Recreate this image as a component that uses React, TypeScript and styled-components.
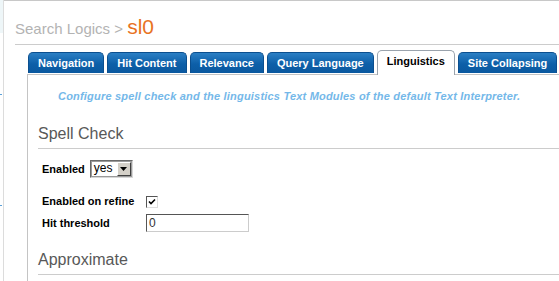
import styled, { createGlobalStyle } from "styled-components";

const GlobalStyle = createGlobalStyle`
    html, body {
        margin: 0;
        padding: 0;
        background: #ffffff;
        overflow: hidden;
    }
    body {
        font-family: "Liberation Sans", Arial, sans-serif;
    }
`;

const tabs = ["Navigation", "Hit Content", "Relevance", "Query Language", "Linguistics", "Site Collapsing"];
const activeTab = "Linguistics";

const Page = styled.div`
    display: flex;
    width: 559px;
    height: 281px;
    overflow: hidden;
`;

const SideStrip = styled.div`
    position: relative;
    width: 3px;
    flex: none;
    border-right: 1px solid #dcdcdc;
    background: linear-gradient(#eef6f8 0, #eef6f8 33px, #ffffff 33px);
`;

const SideMark = styled.span<{ $top: number }>`
    position: absolute;
    left: 0;
    top: ${({ $top }) => $top}px;
    width: 2px;
    height: 1px;
    background: #5aa0d8;
`;

const Main = styled.div`
    flex: 1;
    min-width: 0;
    border-top: 1px solid #c8c8c8;
    padding-left: 11px;
`;

const Title = styled.h1`
    margin: 0;
    padding-top: 16px;
    height: 27px;
    font-weight: normal;
    font-size: 15px;
    line-height: 20px;
    color: #b3b3b3;
    border-bottom: 1px solid #cccccc;
    white-space: nowrap;
`;

const Current = styled.span`
    font-size: 21px;
    color: #e8731f;
`;

const TabArea = styled.div`
    margin-left: 12px;
    margin-top: 5px;
`;

const TabBar = styled.div`
    display: flex;
    align-items: flex-end;
    gap: 3px;
    padding-left: 1px;
    margin-bottom: -1px;
    white-space: nowrap;
`;

const Tab = styled.div<{ $active?: boolean }>`
    flex: none;
    box-sizing: border-box;
    padding: 0 9px;
    font-size: 11px;
    font-weight: bold;
    border-radius: 5px 5px 0 0;
    ${({ $active }) =>
        $active
            ? `
        height: 25px;
        line-height: 20px;
        color: #000000;
        background: #ffffff;
        border: 1px solid #9aa3ad;
        border-bottom: none;
    `
            : `
        height: 21px;
        line-height: 21px;
        margin-bottom: 2px;
        color: #ffffff;
        background: linear-gradient(#2b7fc4, #0d5fa8 55%, #0a589f);
        border: 1px solid #0b4f8f;
        border-bottom: none;
    `}
`;

const Panel = styled.div`
    border-top: 1px solid #c4c4c4;
    border-left: 1px solid #c4c4c4;
    padding: 14px 0 0 10px;
    height: 220px;
`;

const Intro = styled.p`
    margin: 0 0 21px 20px;
    font-size: 11px;
    line-height: 14px;
    letter-spacing: 0.2px;
    font-weight: bold;
    font-style: italic;
    color: #74b8e9;
    white-space: nowrap;
`;

const SectionTitle = styled.h2`
    margin: 0;
    padding-bottom: 4px;
    font-size: 16px;
    line-height: 20px;
    font-weight: normal;
    color: #585858;
    border-bottom: 1px solid #cccccc;
`;

const Form = styled.div`
    padding: 11px 0 18px 4px;
    font-size: 11px;
    line-height: 13px;
`;

const InlineRow = styled.div`
    display: flex;
    align-items: center;
    gap: 5px;
    margin-bottom: 17px;
`;

const Label = styled.span`
    font-size: 11px;
    line-height: 13px;
    font-weight: bold;
    color: #000000;
`;

const FieldGrid = styled.div`
    display: grid;
    grid-template-columns: 104px auto;
    align-items: center;
    justify-items: start;
    row-gap: 6px;
`;

const SelectBox = styled.div`
    display: flex;
    align-items: stretch;
    box-sizing: border-box;
    width: 43px;
    height: 18px;
    border: 1px solid;
    border-color: #6a6a6a #d8d8d8 #d8d8d8 #6a6a6a;
    background: #ffffff;
    outline: 1px solid #9a9a9a;
    outline-offset: -2px;
`;

const SelectValue = styled.span`
    flex: 1;
    padding-left: 3px;
    font-size: 12px;
    line-height: 15px;
    color: #000000;
`;

const SelectButton = styled.span`
    display: flex;
    align-items: center;
    justify-content: center;
    width: 14px;
    margin: 1px;
    box-sizing: border-box;
    background: #d4d0c8;
    border: 1px solid;
    border-color: #ffffff #404040 #404040 #ffffff;
`;

const CheckBox = styled.span`
    display: flex;
    align-items: center;
    justify-content: center;
    box-sizing: border-box;
    width: 12px;
    height: 12px;
    border: 1px solid;
    border-color: #555555 #dddddd #dddddd #555555;
    background: #ffffff;
`;

const TextInput = styled.div`
    box-sizing: border-box;
    width: 103px;
    height: 18px;
    padding-left: 2px;
    border: 1px solid;
    border-color: #555555 #cccccc #cccccc #555555;
    font-size: 12px;
    line-height: 16px;
    color: #333333;
`;

export default function App() {
    return (
        <>
            <GlobalStyle />
            <Page>
                <SideStrip>
                    <SideMark $top={94} />
                    <SideMark $top={205} />
                </SideStrip>
                <Main>
                    <Title>
                        Search Logics &gt; <Current>sl0</Current>
                    </Title>
                    <TabArea>
                        <TabBar>
                            {tabs.map(t => (
                                <Tab key={t} $active={t === activeTab}>{t}</Tab>
                            ))}
                        </TabBar>
                        <Panel>
                            <Intro>
                                Configure spell check and the linguistics Text Modules of the default Text Interpreter.
                            </Intro>
                            <SectionTitle>Spell Check</SectionTitle>
                            <Form>
                                <InlineRow>
                                    <Label>Enabled</Label>
                                    <SelectBox>
                                        <SelectValue>yes</SelectValue>
                                        <SelectButton>
                                            <svg width="7" height="4" viewBox="0 0 7 4">
                                                <path d="M0 0h7L3.5 4z" fill="#000" />
                                            </svg>
                                        </SelectButton>
                                    </SelectBox>
                                </InlineRow>
                                <FieldGrid>
                                    <Label>Enabled on refine</Label>
                                    <CheckBox>
                                        <svg width="8" height="8" viewBox="0 0 8 8">
                                            <path d="M1 3.5l2 2L7 1.5" stroke="#000" strokeWidth="1.6" fill="none" />
                                        </svg>
                                    </CheckBox>
                                    <Label>Hit threshold</Label>
                                    <TextInput>0</TextInput>
                                </FieldGrid>
                            </Form>
                            <SectionTitle>Approximate</SectionTitle>
                        </Panel>
                    </TabArea>
                </Main>
            </Page>
        </>
    );
}
